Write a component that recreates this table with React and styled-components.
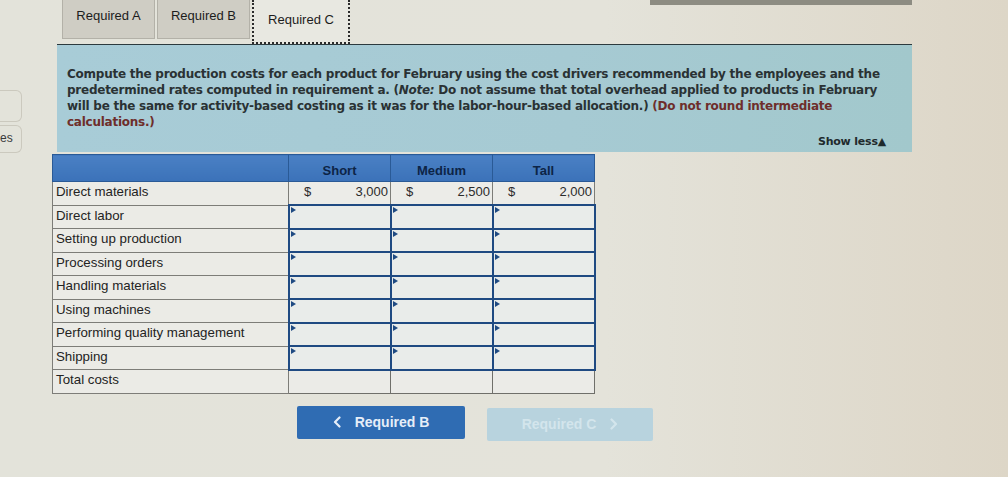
import React from 'react';
import styled, { createGlobalStyle } from 'styled-components';

const GlobalStyle = createGlobalStyle`
  html, body {
    margin: 0;
    padding: 0;
  }
  body {
    font-family: "Liberation Sans", Arial, sans-serif;
    background: #e2e1d7;
  }
`;

const Page = styled.div`
  width: 1008px;
  height: 477px;
  overflow: hidden;
  display: grid;
  grid-template-columns: 22px 1fr;
  column-gap: 30px;
  background: linear-gradient(90deg, #e3e3da 0%, #e4e3da 60%, #ddd6c7 100%);
`;

const Side = styled.div`
  display: flex;
  flex-direction: column;
  gap: 3px;
  padding-top: 90px;
`;

const SideBox = styled.div`
  height: ${p => p.$h}px;
  border: 1px solid #cbc9be;
  border-left: none;
  border-radius: 0 6px 6px 0;
  display: flex;
  align-items: flex-end;
  padding-bottom: 7px;
  box-sizing: border-box;
  font-size: 12px;
  color: #3a3a3a;
`;

const Main = styled.div`
  display: flex;
  flex-direction: column;
  position: relative;
`;

const TopBar = styled.div`
  position: absolute;
  top: 0;
  left: 598px;
  width: 262px;
  height: 5px;
  background: #8d8c82;
`;

const Tabs = styled.div`
  display: flex;
  align-items: flex-start;
  gap: 2px;
  padding-left: 10px;
  height: 44px;
`;

const Tab = styled.div`
  box-sizing: border-box;
  width: ${p => p.$w}px;
  height: ${p => (p.$active ? 44 : 39)}px;
  display: flex;
  align-items: center;
  justify-content: center;
  padding-bottom: ${p => (p.$active ? 4 : 7)}px;
  font-size: 13px;
  color: #1c1c1c;
  background: ${p => (p.$active ? '#e8e8e1' : '#cfcdc4')};
  border: ${p => (p.$active ? '2px dotted #2b2b2b' : '1px solid #b3b1a8')};
  border-top: none;
`;

const Panel = styled.div`
  margin-left: 5px;
  width: 855px;
  height: 108px;
  box-sizing: border-box;
  background: linear-gradient(90deg, #a8ccd7 0%, #a6cad3 60%, #a2c8cc 100%);
  border-top: 1px solid #2c3a3e;
  padding: 21px 26px 0 10px;
  display: flex;
  flex-direction: column;
`;

const Instructions = styled.p`
  margin: 0;
  font-family: "DejaVu Sans", Verdana, sans-serif;
  font-size: 12px;
  font-weight: 700;
  line-height: 16px;
  color: #2a3234;
  letter-spacing: -0.25px;
  white-space: nowrap;
`;

const Red = styled.span`
  color: #6e2e2b;
`;

const ShowLess = styled.div`
  margin-top: auto;
  margin-bottom: 4px;
  align-self: flex-end;
  font-family: "DejaVu Sans", Verdana, sans-serif;
  font-size: 11px;
  font-weight: 700;
  letter-spacing: -0.2px;
  color: #1f2a2c;
`;

const Table = styled.table`
  margin-top: 2px;
  border-collapse: collapse;
  width: 542px;
  table-layout: fixed;
  font-size: 13.3px;
  color: #232323;
`;

const HeadCell = styled.th`
  height: 27px;
  padding: 5px 0 0;
  box-sizing: border-box;
  background: linear-gradient(180deg, #4a80c4 0%, #3b72b9 100%);
  border: 1px solid #2a5a96;
  color: #0d2446;
  font-size: 13px;
  font-weight: 700;
  vertical-align: middle;
  text-align: center;
`;

const LabelCell = styled.td`
  height: 23.5px;
  padding: 0 0 3px 3px;
  box-sizing: border-box;
  background: #ebebe6;
  border: 1px solid #7d7d78;
  white-space: nowrap;
  vertical-align: middle;
`;

const ValueCell = styled.td`
  padding: 0 2px 3px 0;
  background: #ececE8;
  border: 1px solid #7d7d78;
  vertical-align: middle;
`;

const ValueInner = styled.div`
  display: flex;
  justify-content: space-between;
  padding-left: 15px;
  font-size: 13px;
  color: #2b2b2b;
`;

const InputCell = styled.td`
  position: relative;
  padding: 0;
  background: #e9ecea;
  border: 2px solid #1f4a82;
`;

const Marker = styled.span`
  position: absolute;
  top: 1px;
  left: 1px;
  width: 0;
  height: 0;
  border-top: 3px solid transparent;
  border-bottom: 3px solid transparent;
  border-left: 5px solid #1f4a82;
`;

const EmptyCell = styled.td`
  padding: 0;
  background: #ebebe7;
  border: 1px solid #6f6f6a;
`;

const Buttons = styled.div`
  display: flex;
  gap: 22px;
  margin: 12px 0 0 245px;
  align-items: flex-start;
`;

const NavButton = styled.div`
  box-sizing: border-box;
  width: ${p => p.$w}px;
  height: 33px;
  margin-top: ${p => (p.$disabled ? 2 : 0)}px;
  display: flex;
  align-items: center;
  justify-content: center;
  gap: 14px;
  border-radius: 2px;
  font-size: 14px;
  font-weight: 700;
  background: ${p => (p.$disabled ? '#b8d3de' : '#2f6cb3')};
  color: ${p => (p.$disabled ? '#d3e5ec' : '#e6eef8')};
`;

const Chevron = ({ dir }) => (
  <svg width="8" height="12" viewBox="0 0 8 12" fill="none">
    <path
      d={dir === 'left' ? 'M6.5 1.5 L2 6 L6.5 10.5' : 'M1.5 1.5 L6 6 L1.5 10.5'}
      stroke="currentColor"
      strokeWidth="2.2"
      strokeLinecap="round"
      strokeLinejoin="round"
    />
  </svg>
);

const rows = [
  'Direct labor',
  'Setting up production',
  'Processing orders',
  'Handling materials',
  'Using machines',
  'Performing quality management',
  'Shipping'
];

const materials = ['3,000', '2,500', '2,000'];

export default function App() {
  return (
    <>
      <GlobalStyle />
      <Page>
        <Side>
          <SideBox $h={32} />
          <SideBox $h={28}>es</SideBox>
        </Side>
        <Main>
          <TopBar />
          <Tabs>
            <Tab $w={93}>Required A</Tab>
            <Tab $w={93}>Required B</Tab>
            <Tab $w={98} $active>Required C</Tab>
          </Tabs>
          <Panel>
            <Instructions>
              Compute the production costs for each product for February using the cost drivers recommended by the employees and the
              <br />
              predetermined rates computed in requirement a. (<i>Note:</i> Do not assume that total overhead applied to products in February
              <br />
              will be the same for activity-based costing as it was for the labor-hour-based allocation.) <Red>(Do not round intermediate</Red>
              <br />
              <Red>calculations.)</Red>
            </Instructions>
            <ShowLess>Show less▲</ShowLess>
          </Panel>
          <Table>
            <colgroup>
              <col style={{ width: 236 }} />
              <col style={{ width: 102 }} />
              <col style={{ width: 102 }} />
              <col style={{ width: 102 }} />
            </colgroup>
            <thead>
              <tr>
                <HeadCell />
                <HeadCell>Short</HeadCell>
                <HeadCell>Medium</HeadCell>
                <HeadCell>Tall</HeadCell>
              </tr>
            </thead>
            <tbody>
              <tr>
                <LabelCell>Direct materials</LabelCell>
                {materials.map(v => (
                  <ValueCell key={v}>
                    <ValueInner>
                      <span>$</span>
                      <span>{v}</span>
                    </ValueInner>
                  </ValueCell>
                ))}
              </tr>
              {rows.map(label => (
                <tr key={label}>
                  <LabelCell>{label}</LabelCell>
                  {[0, 1, 2].map(i => (
                    <InputCell key={i}>
                      <Marker />
                    </InputCell>
                  ))}
                </tr>
              ))}
              <tr>
                <LabelCell>Total costs</LabelCell>
                <EmptyCell />
                <EmptyCell />
                <EmptyCell />
              </tr>
            </tbody>
          </Table>
          <Buttons>
            <NavButton $w={168}>
              <Chevron dir="left" />
              Required B
            </NavButton>
            <NavButton $w={166} $disabled>
              Required C
              <Chevron dir="right" />
            </NavButton>
          </Buttons>
        </Main>
      </Page>
    </>
  );
}
